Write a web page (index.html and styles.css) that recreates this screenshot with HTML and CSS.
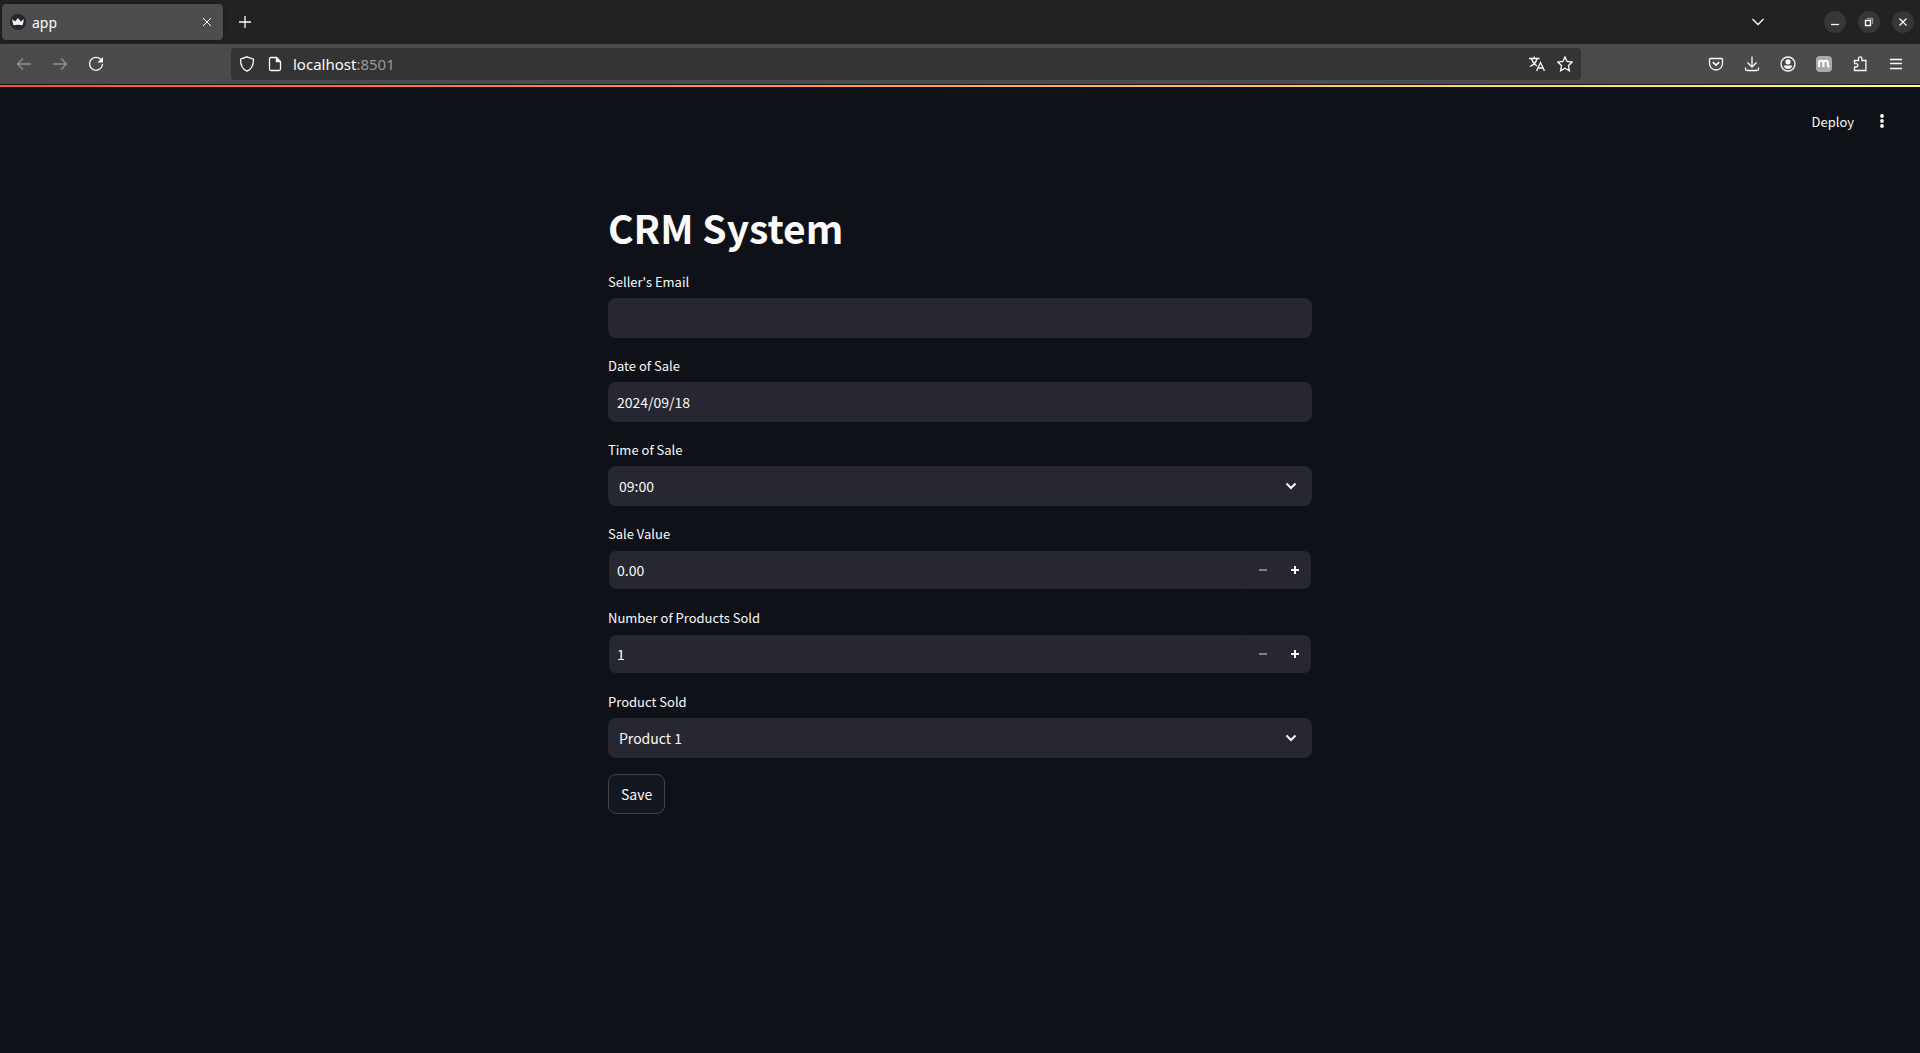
FILE: index.html
```html
<!DOCTYPE html>
<html lang="en">
<head>
<meta charset="utf-8">
<meta name="viewport" content="width=device-width, initial-scale=1">
<title>app</title>
<link rel="stylesheet" href="styles.css">
</head>
<body>
<div class="tabbar">
  <div class="tab">
    <svg class="favicon" width="16" height="16" viewBox="0 0 16 16" aria-hidden="true"><circle cx="8" cy="8" r="8" fill="#262730"/><path d="M2 5.2 5.2 7.4 8 4l2.8 3.4L14 5.2 12.6 11.2Q8 10.200 3.400 11.200Z" fill="#f4f4f4"/></svg>
    <span class="tab-title">app</span>
    <button class="icon-button tab-close" aria-label="Close tab"><svg width="10" height="10" viewBox="0 0 10 10"><path d="M1 1l8 8M9 1l-8 8"/></svg></button>
  </div>
  <button class="icon-button new-tab" aria-label="New tab"><svg width="14" height="14" viewBox="0 0 14 14"><path d="M7 1v12M1 7h12"/></svg></button>
  <button class="icon-button list-tabs" aria-label="List all tabs"><svg width="14" height="8" viewBox="0 0 14 8"><path d="M1.500 1 7 6.500 12.500 1"/></svg></button>
  <div class="window-controls">
    <button class="window-button" aria-label="Minimize"><svg width="10" height="10" viewBox="0 0 10 10"><path d="M1 7.500h8"/></svg></button>
    <button class="window-button" aria-label="Restore"><svg width="10" height="10" viewBox="0 0 10 10"><path d="M1.500 3.500h5v5h-5z"/><path d="M3 1.500h5.500V7" opacity=".45"/></svg></button>
    <button class="window-button" aria-label="Close"><svg width="10" height="10" viewBox="0 0 10 10"><path d="M1.500 1.500l7 7M8.500 1.500l-7 7"/></svg></button>
  </div>
</div>
<div class="toolbar">
  <div class="toolbar-group">
    <button class="icon-button tool" disabled aria-label="Back"><svg width="16" height="16" viewBox="0 0 16 16"><path d="M15 8H1.500M7 2.500 1.500 8 7 13.500"/></svg></button>
    <button class="icon-button tool" disabled aria-label="Forward"><svg width="16" height="16" viewBox="0 0 16 16"><path d="M1 8h13.500M9 2.500 14.500 8 9 13.500"/></svg></button>
    <button class="icon-button tool" aria-label="Reload"><svg width="16" height="16" viewBox="0 0 16 16"><path d="M12.800 3.400A6.500 6.500 0 1 0 14.500 8"/><path d="M15 1v5.500H9.500Z" fill="currentColor" stroke="none"/></svg></button>
  </div>
  <div class="spring"></div>
  <div class="urlbar">
    <svg width="16" height="16" viewBox="0 0 16 16"><path d="M8 .8 14.500 3.200C14.500 9 12.500 13.300 8 15.200 3.500 13.300 1.500 9 1.500 3.200Z"/></svg>
    <svg width="16" height="16" viewBox="0 0 16 16"><path d="M9.500 1.500H4Q2.500 1.500 2.500 3v10q0 1.500 1.500 1.500h8q1.500 0 1.500-1.500V5.500Z"/><path d="M8.800 1.200V6.200H13.800Z" fill="currentColor" stroke="none"/></svg>
    <span class="url">localhost<span class="port">:8501</span></span>
    <button class="icon-button url-action" aria-label="Translate page"><svg width="16" height="16" viewBox="0 0 16 16"><path d="M0 2.500h10.500M5.200.5v2M8 2.500C7.200 6.200 4.300 9.200.8 10.500M2.500 2.500C3.500 6.300 5.600 8.500 8 10"/><path d="M7.500 15 11.500 6.500 15.500 15M9 12h5"/></svg></button>
    <button class="icon-button url-action" aria-label="Bookmark this page"><svg width="16" height="16" viewBox="0 0 16 16"><path d="M8 .9 10.100 5.400 15.200 6 11.500 9.500 12.400 14.800 8 12.300 3.600 14.800 4.500 9.500.8 6 5.900 5.400Z"/></svg></button>
  </div>
  <div class="spring"></div>
  <div class="toolbar-group">
    <button class="icon-button tool" aria-label="Save to Pocket"><svg width="16" height="16" viewBox="0 0 16 16"><path d="M2.500 2.500h11q1 0 1 1V7.500a6.500 6.500 0 0 1-13 0v-4q0-1 1-1Z"/><path d="M4.800 6.200 8 9.200l3.200-3" stroke-width="1.600"/></svg></button>
    <button class="icon-button tool" aria-label="Downloads"><svg width="16" height="16" viewBox="0 0 16 16"><path d="M8 .5V11M3.500 6.500 8 11l4.500-4.500M1.500 11.500V13q0 1.500 1.500 1.500h10q1.500 0 1.500-1.500v-1.500"/></svg></button>
    <button class="icon-button tool" aria-label="Account"><svg width="16" height="16" viewBox="0 0 16 16"><circle cx="8" cy="8" r="7"/><circle cx="8" cy="5.800" r="2.600" fill="currentColor" stroke="none"/><path d="M3.800 9.500h8.400Q11.500 13 8 13T3.800 9.500Z" fill="currentColor" stroke="none"/></svg></button>
    <button class="icon-button tool" aria-label="Extension"><svg width="16" height="16" viewBox="0 0 16 16"><rect width="16" height="16" rx="4" fill="#ababab" stroke="none"/><path d="M3 4.200V11M3.200 6.200Q5.500 3.500 7.400 5.600V11M7.500 6.200Q10 3.500 11.800 5.600V9.500q0 1.400 1.700.8" stroke="#fff" stroke-width="2"/></svg></button>
    <button class="icon-button tool" aria-label="Extensions"><svg width="16" height="16" viewBox="0 0 16 16"><path d="M2.500 4.500H6.500V2.500a1.700 1.700 0 0 1 3.400 0v2h4v10H2.500V11H4.200a1.700 1.700 0 0 0 0-3.400H2.500Z"/></svg></button>
    <button class="icon-button tool" aria-label="Application menu"><svg width="16" height="16" viewBox="0 0 16 16"><path d="M2 3.500h12M2 7.500h12M2 12.500h12"/></svg></button>
  </div>
</div>
<div class="app">
  <div class="decoration"></div>
  <header class="app-header">
    <button class="deploy">Deploy</button>
    <button class="menu" aria-label="Main menu"><svg width="4" height="14" viewBox="0 0 4 14" fill="currentColor"><circle cx="2" cy="2" r="1.900"/><circle cx="2" cy="7" r="1.900"/><circle cx="2" cy="12" r="1.900"/></svg></button>
  </header>
  <main class="content">
    <h1>CRM System</h1>
    <form class="form">
      <div class="field">
        <label for="email">Seller's Email</label>
        <input class="control" id="email" type="text">
      </div>
      <div class="field">
        <label for="date">Date of Sale</label>
        <input class="control" id="date" type="text" value="2024/09/18">
      </div>
      <div class="field">
        <label for="time">Time of Sale</label>
        <div class="select">
          <select class="control" id="time"><option>09:00</option></select>
          <svg class="chevron" width="12" height="8" viewBox="0 0 12 8"><path d="M1.500 1.500 6 6l4.500-4.500"/></svg>
        </div>
      </div>
      <div class="field">
        <label for="value">Sale Value</label>
        <div class="stepper">
          <input class="control" id="value" type="number" step="0.01" min="0" value="0.00">
          <button class="step" type="button" disabled aria-label="Decrease value"><svg width="8" height="8" viewBox="0 0 8 8"><path d="M0 4h8"/></svg></button>
          <button class="step" type="button" aria-label="Increase value"><svg width="8" height="8" viewBox="0 0 8 8"><path d="M0 4h8M4 0v8"/></svg></button>
        </div>
      </div>
      <div class="field">
        <label for="count">Number of Products Sold</label>
        <div class="stepper">
          <input class="control" id="count" type="number" min="1" value="1">
          <button class="step" type="button" disabled aria-label="Decrease number"><svg width="8" height="8" viewBox="0 0 8 8"><path d="M0 4h8"/></svg></button>
          <button class="step" type="button" aria-label="Increase number"><svg width="8" height="8" viewBox="0 0 8 8"><path d="M0 4h8M4 0v8"/></svg></button>
        </div>
      </div>
      <div class="field">
        <label for="product">Product Sold</label>
        <div class="select">
          <select class="control" id="product"><option>Product 1</option></select>
          <svg class="chevron" width="12" height="8" viewBox="0 0 12 8"><path d="M1.500 1.500 6 6l4.500-4.500"/></svg>
        </div>
      </div>
      <button class="save" type="button">Save</button>
    </form>
  </main>
</div>
</body>
</html>
```
FILE: styles.css
```css
* {
  box-sizing: border-box;
}

body {
  margin: 0;
  min-height: 100vh;
  display: flex;
  flex-direction: column;
  background: #0e1117;
  color: #fafafa;
  font-family: "Noto Sans CJK SC", "Noto Sans", sans-serif;
  font-size: 14px;
}

button,
input,
select {
  margin: 0;
  font: inherit;
  color: inherit;
}

button {
  padding: 0;
  border: 0;
  background: none;
}

svg {
  display: block;
  flex: none;
}

/* Browser chrome */
.tabbar,
.toolbar {
  display: flex;
  align-items: center;
  color: #fbfbfe;
  font-family: "Noto Sans", sans-serif;
}

.tabbar {
  height: 44px;
  padding: 0 6px 0 2px;
  background: #222222;
}

.tabbar svg,
.toolbar svg {
  fill: none;
  stroke: currentColor;
  stroke-width: 1.3;
}

.tab {
  display: flex;
  align-items: center;
  width: 221px;
  height: 36px;
  padding: 0 4px 0 8px;
  border-radius: 4px;
  background: #4d4d4d;
  box-shadow: 0 0 3px #111111;
}

.tab .favicon {
  stroke: none;
}

.tab-title {
  flex: 1;
  padding-left: 6px;
}

.icon-button,
.window-button {
  display: flex;
  align-items: center;
  justify-content: center;
}

.tab-close {
  width: 24px;
  height: 24px;
}

.tab-close svg {
  stroke-width: 1;
}

.new-tab {
  width: 44px;
  height: 36px;
}

.list-tabs {
  width: 36px;
  height: 36px;
  margin-left: auto;
}

.window-controls {
  display: flex;
  gap: 12px;
  margin-left: 48px;
}

.window-button {
  width: 22px;
  height: 22px;
  border-radius: 50%;
  background: #373737;
}

.toolbar {
  height: 41px;
  padding: 0 6px;
  border-bottom: 1px solid #161616;
  background: #4b4b4b;
}

.toolbar-group {
  display: flex;
}

.tool {
  width: 36px;
  height: 32px;
}

.tool:disabled {
  color: #919193;
}

.spring {
  flex: 117;
}

.urlbar {
  flex: 1334;
  display: flex;
  align-items: center;
  gap: 12px;
  height: 32px;
  padding: 0 8px;
  border-radius: 4px;
  background: #343434;
}

.url {
  flex: 1;
  margin-left: -2px;
  font-size: 15px;
}

.port {
  color: #98989a;
}

/* Application */
.decoration {
  height: 2px;
  background: linear-gradient(90deg, #ff4b4b, #fffd80);
}

.app-header {
  display: flex;
  align-items: center;
  justify-content: flex-end;
  gap: 26px;
  height: 68px;
  padding-right: 36px;
}

.deploy {
  font-size: 13px;
}

.content {
  max-width: 736px;
  margin: 0 auto;
  padding: 46px 16px 160px;
}

h1 {
  margin: 0;
  padding-bottom: 17px;
  font-size: 39px;
  font-weight: 700;
  line-height: 52px;
}

.form {
  display: flex;
  flex-direction: column;
  gap: 16px;
}

.field {
  display: flex;
  flex-direction: column;
  gap: 4px;
}

label {
  font-size: 13px;
  line-height: 24px;
}

.control {
  width: 100%;
  height: 40px;
  padding: 0 9px;
  border: 0;
  border-radius: 8px;
  outline: 0;
  background: #262730;
  appearance: none;
}

.select {
  position: relative;
}

.select .control {
  display: block;
  padding: 0 40px 0 11px;
}

.chevron {
  position: absolute;
  top: 16px;
  right: 15px;
  fill: none;
  stroke: currentColor;
  stroke-width: 2;
  pointer-events: none;
}

.stepper {
  display: flex;
  overflow: hidden;
  border: 1px solid #0e1117;
  border-radius: 8px;
  background: #262730;
}

.stepper .control {
  flex: 1;
  height: 38px;
  padding: 0 8px;
  appearance: textfield;
}

.stepper .control::-webkit-inner-spin-button {
  appearance: none;
  margin: 0;
}

.step {
  display: flex;
  align-items: center;
  justify-content: center;
  width: 32px;
}

.step svg {
  stroke: currentColor;
  stroke-width: 2;
}

.step:disabled {
  color: #808495;
}

.save {
  align-self: flex-start;
  height: 40px;
  padding: 0 12px;
  border: 1px solid #41444c;
  border-radius: 8px;
  background: #131720;
}
```
